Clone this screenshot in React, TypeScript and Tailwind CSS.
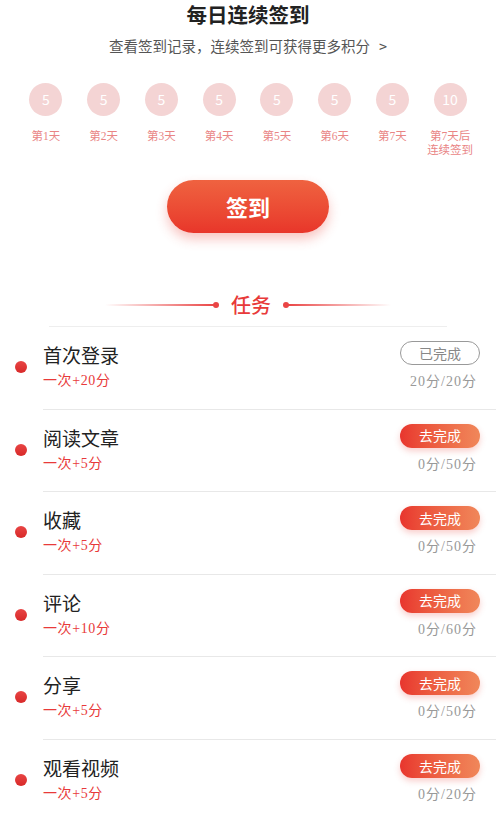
import React from "react";

const days = [
  { value: 5, label: "第1天" },
  { value: 5, label: "第2天" },
  { value: 5, label: "第3天" },
  { value: 5, label: "第4天" },
  { value: 5, label: "第5天" },
  { value: 5, label: "第6天" },
  { value: 5, label: "第7天" },
  { value: 10, label: "第7天后\n连续签到" },
];

const tasks = [
  { name: "首次登录", reward: "一次+20分", progress: "20分/20分", done: true },
  { name: "阅读文章", reward: "一次+5分", progress: "0分/50分", done: false },
  { name: "收藏", reward: "一次+5分", progress: "0分/50分", done: false },
  { name: "评论", reward: "一次+10分", progress: "0分/60分", done: false },
  { name: "分享", reward: "一次+5分", progress: "0分/50分", done: false },
  { name: "观看视频", reward: "一次+5分", progress: "0分/20分", done: false },
];

// 数字用衬线体，中文回落到思源黑体
const serifNum = { fontFamily: '"Liberation Serif", "Noto Sans CJK SC", serif' };

export default function App() {
  return (
    <div
      className="w-[496px] h-[813px] overflow-hidden bg-white"
      style={{ fontFamily: '"Noto Sans CJK SC", "Noto Sans", sans-serif' }}
    >
      {/* 标题 */}
      <div className="flex flex-col items-center">
        <h1 className="text-[20.5px] leading-[28px] font-bold text-[#222]">每日连续签到</h1>
        <div className="mt-[8px] text-[14.5px] leading-[20px] text-[#555] flex items-center gap-[9px]">
          <span>查看签到记录，连续签到可获得更多积分</span>
          <span>&gt;</span>
        </div>
      </div>

      {/* 签到天数 */}
      <div className="grid grid-cols-8 px-[17px] mt-[27px]">
        {days.map((d, i) => (
          <div key={i} className="flex flex-col items-center">
            <div className="w-[33px] h-[33px] rounded-full bg-[#f4d4d4] flex items-center justify-center text-white text-[14px]">
              {d.value}
            </div>
            <div
              className="mt-[13px] text-[11.5px] leading-[14px] text-[#e98585] text-center whitespace-pre-line"
              style={serifNum}
            >
              {d.label}
            </div>
          </div>
        ))}
      </div>

      {/* 按钮 */}
      <div className="flex justify-center mt-[23px]">
        <button className="w-[162px] h-[53px] rounded-full bg-gradient-to-b from-[#ef6240] to-[#e8352a] text-white text-[22px] font-bold shadow-[0_6px_12px_rgba(232,60,50,0.3)]">
          签到
        </button>
      </div>

      {/* 任务标题 */}
      <div className="flex items-center justify-center mt-[58px]">
        <div className="w-[110px] h-[2px] bg-gradient-to-r from-transparent to-[#ea4545]" />
        <div className="w-[6px] h-[6px] rounded-full bg-[#ea4545] -ml-[2px]" />
        <span className="mx-[12px] text-[20px] leading-[28px] font-medium text-[#e83a3a]">任务</span>
        <div className="w-[6px] h-[6px] rounded-full bg-[#ea4545]" />
        <div className="w-[104px] h-[2px] bg-gradient-to-l from-transparent to-[#ea4545] -ml-[2px]" />
      </div>
      <div className="mx-[49px] mt-[7px] h-[1px] bg-[#eeeeee]" />

      {/* 任务列表 */}
      <div>
        {tasks.map((t, i) => (
          <div key={i} className="flex items-center h-[82.5px]">
            <div className="w-[12px] h-[12px] rounded-full bg-gradient-to-b from-[#e84444] to-[#d82828] ml-[15px] -mt-[2px] shrink-0" />
            <div
              className={
                "flex-1 h-full flex items-center ml-[16px] pr-[16px] " +
                (i < tasks.length - 1 ? "border-b border-[#e8e8e8]" : "")
              }
            >
              <div className="flex-1 flex flex-col -mt-[2px]">
                <span className="text-[19px] leading-[26px] text-[#222]">{t.name}</span>
                <span
                  className="mt-[3px] text-[14px] leading-[20px] text-[#e83a3a] tracking-[0.6px]"
                  style={serifNum}
                >
                  {t.reward}
                </span>
              </div>
              <div className="flex flex-col items-end -mt-[2px]">
                {t.done ? (
                  <div className="w-[80px] h-[24px] rounded-full border border-[#999] text-[#888] text-[14px] flex items-center justify-center">
                    已完成
                  </div>
                ) : (
                  <div className="w-[80px] h-[24px] rounded-full bg-gradient-to-r from-[#e8352e] to-[#f0875a] text-white text-[14px] flex items-center justify-center shadow-[0_3px_6px_rgba(232,60,50,0.25)]">
                    去完成
                  </div>
                )}
                <span
                  className="mt-[7px] mr-[3px] text-[14px] leading-[20px] text-[#999] tracking-[1px]"
                  style={serifNum}
                >
                  {t.progress}
                </span>
              </div>
            </div>
          </div>
        ))}
      </div>
    </div>
  );
}
